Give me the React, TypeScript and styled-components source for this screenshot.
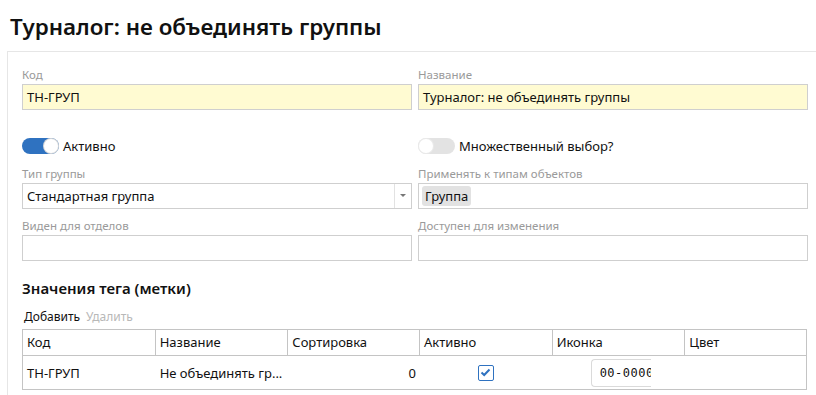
import styled, { createGlobalStyle } from "styled-components";

const GlobalStyle = createGlobalStyle`
  html, body {
    margin: 0;
    padding: 0;
    background: #fff;
    font-family: "Noto Sans", "Open Sans", sans-serif;
    color: #222;
    overflow: hidden;
  }
`;

type Column = {
    title: string
    width: number
};

const columns: Column[] = [
    { title: "Код", width: 133 },
    { title: "Название", width: 133 },
    { title: "Сортировка", width: 132 },
    { title: "Активно", width: 133 },
    { title: "Иконка", width: 133 },
    { title: "Цвет", width: 121 },
];

const Toggle = ({ on }: { on: boolean }) => (
    <Track $on={on}>
        <Knob $on={on} />
    </Track>
);

const App = (): JSX.Element => {
    return (
        <Page>
            <GlobalStyle />
            <Title>Турналог: не объединять группы</Title>
            <Panel>
                <Grid>
                    <Field>
                        <Label>Код</Label>
                        <Input $yellow>ТН-ГРУП</Input>
                    </Field>
                    <Field>
                        <Label>Название</Label>
                        <Input $yellow>Турналог: не объединять группы</Input>
                    </Field>
                </Grid>

                <Grid $top={26}>
                    <SwitchRow>
                        <Toggle on />
                        <span>Активно</span>
                    </SwitchRow>
                    <SwitchRow>
                        <Toggle on={false} />
                        <span>Множественный выбор?</span>
                    </SwitchRow>
                </Grid>

                <Grid $top={9}>
                    <Field>
                        <Label>Тип группы</Label>
                        <Select>
                            <span>Стандартная группа</span>
                            <Arrow />
                        </Select>
                    </Field>
                    <Field>
                        <Label>Применять к типам объектов</Label>
                        <Input>
                            <Tag>Группа</Tag>
                        </Input>
                    </Field>
                </Grid>

                <Grid $top={8}>
                    <Field>
                        <Label>Виден для отделов</Label>
                        <Input />
                    </Field>
                    <Field>
                        <Label>Доступен для изменения</Label>
                        <Input />
                    </Field>
                </Grid>

                <SubTitle>Значения тега (метки)</SubTitle>
                <Toolbar>
                    <ToolButton>Добавить</ToolButton>
                    <ToolButton $disabled>Удалить</ToolButton>
                </Toolbar>

                <Table>
                    <HeadRow>
                        {columns.map((c) => (
                            <HeadCell key={c.title} style={{ width: c.width }}>
                                {c.title}
                            </HeadCell>
                        ))}
                    </HeadRow>
                    <BodyRow>
                        <Cell style={{ width: columns[0].width }}>ТН-ГРУП</Cell>
                        <Cell style={{ width: columns[1].width }}>Не объединять гр...</Cell>
                        <Cell style={{ width: columns[2].width }} $right>0</Cell>
                        <Cell style={{ width: columns[3].width }} $center>
                            <Check>
                                <svg width="11" height="9" viewBox="0 0 11 9">
                                    <path d="M1.5 4.5 L4.2 7 L9.5 1.5" fill="none" stroke="#2f72c0" strokeWidth="2" />
                                </svg>
                            </Check>
                        </Cell>
                        <Cell style={{ width: columns[4].width }}>
                            <IconBox>00-0000</IconBox>
                        </Cell>
                        <Cell style={{ width: columns[5].width }} />
                    </BodyRow>
                </Table>
            </Panel>
        </Page>
    );
};

export default App;

const Page = styled.div`
  width: 816px;
  height: 395px;
  overflow: hidden;
`;

const Title = styled.h1`
  margin: 0;
  padding: 12px 0 0 10px;
  height: 39px;
  box-sizing: border-box;
  font-size: 22.4px;
  font-weight: 600;
  line-height: 30px;
  color: #111;
`;

const Panel = styled.div`
  margin: 12px 0 0 7px;
  border-top: 1px solid #e6e6e6;
  border-left: 1px solid #e6e6e6;
  padding: 14px 0 0 14px;
  height: 400px;
`;

const Grid = styled.div<{ $top?: number }>`
  display: grid;
  grid-template-columns: 390px 390px;
  column-gap: 6px;
  margin-top: ${(p) => p.$top ?? 0}px;
`;

const Field = styled.div`
  display: flex;
  flex-direction: column;
`;

const Label = styled.div`
  font-size: 11.5px;
  line-height: 18px;
  color: #9a9a9a;
  height: 18px;
`;

const Input = styled.div<{ $yellow?: boolean }>`
  height: 26px;
  box-sizing: border-box;
  border: 1px solid #cfcfcf;
  background: ${(p) => (p.$yellow ? "#fffbd2" : "#fff")};
  display: flex;
  align-items: center;
  padding: 0 4px;
  font-size: 13px;
  color: #111;
  white-space: nowrap;
`;

const Select = styled(Input)`
  justify-content: space-between;
  padding-right: 0;
`;

const Arrow = styled.div`
  width: 16px;
  height: 24px;
  border-left: 1px solid #e2e2e2;
  position: relative;
  &::after {
    content: "";
    position: absolute;
    left: 5px;
    top: 10px;
    border-left: 3px solid transparent;
    border-right: 3px solid transparent;
    border-top: 3px solid #777;
  }
`;

const Tag = styled.span`
  background: #e2e2e2;
  border-radius: 3px;
  padding: 1px 3px;
  line-height: 18px;
  font-size: 13px;
  margin-left: -1px;
`;

const SwitchRow = styled.div`
  display: flex;
  align-items: center;
  font-size: 13px;
  color: #111;
  height: 20px;
  gap: 4px;
`;

const Track = styled.div<{ $on: boolean }>`
  width: 37px;
  height: 16px;
  border-radius: 8px;
  background: ${(p) => (p.$on ? "#2f72c0" : "#e3e3e3")};
  display: flex;
  align-items: center;
  justify-content: ${(p) => (p.$on ? "flex-end" : "flex-start")};
  padding: 0 1px;
  box-sizing: border-box;
`;

const Knob = styled.div<{ $on: boolean }>`
  width: 14px;
  height: 14px;
  border-radius: 50%;
  background: #fff;
  box-shadow: 0 0 0 1px ${(p) => (p.$on ? "#d8d8d8" : "#eaeaea")};
`;

const SubTitle = styled.h3`
  margin: 16px 0 0 0;
  font-size: 15px;
  font-weight: 600;
  line-height: 22px;
  color: #111;
`;

const Toolbar = styled.div`
  display: flex;
  gap: 6px;
  margin: 8px 0 0 2px;
  height: 18px;
  align-items: center;
`;

const ToolButton = styled.span<{ $disabled?: boolean }>`
  font-size: 12px;
  color: ${(p) => (p.$disabled ? "#b8b8b8" : "#111")};
`;

const Table = styled.div`
  margin-top: 4px;
  width: 785px;
  border: 1px solid #c4c4c4;
  box-sizing: border-box;
`;

const HeadRow = styled.div`
  display: flex;
  height: 25px;
  border-bottom: 1px solid #c4c4c4;
`;

const HeadCell = styled.div`
  box-sizing: border-box;
  padding: 0 4px;
  font-size: 13px;
  line-height: 25px;
  color: #111;
  border-right: 1px solid #c4c4c4;
  &:last-child {
    border-right: none;
  }
`;

const BodyRow = styled.div`
  display: flex;
  height: 33px;
  align-items: center;
`;

const Cell = styled.div<{ $right?: boolean; $center?: boolean }>`
  box-sizing: border-box;
  padding: 0 4px;
  font-size: 13px;
  color: #111;
  display: flex;
  align-items: center;
  justify-content: ${(p) => (p.$right ? "flex-end" : p.$center ? "center" : "flex-start")};
`;

const Check = styled.div`
  width: 14px;
  height: 14px;
  border: 1px solid #2f72c0;
  border-radius: 2px;
  display: flex;
  align-items: center;
  justify-content: center;
  margin-left: -1px;
`;

const IconBox = styled.div`
  margin-left: 34px;
  width: 60px;
  height: 28px;
  box-sizing: border-box;
  border: 1px solid #dadada;
  border-right: none;
  border-radius: 4px 0 0 4px;
  padding-left: 8px;
  font-family: "DejaVu Sans Mono", monospace;
  font-size: 12px;
  line-height: 26px;
  overflow: hidden;
  white-space: nowrap;
  letter-spacing: 0.5px;
`;
